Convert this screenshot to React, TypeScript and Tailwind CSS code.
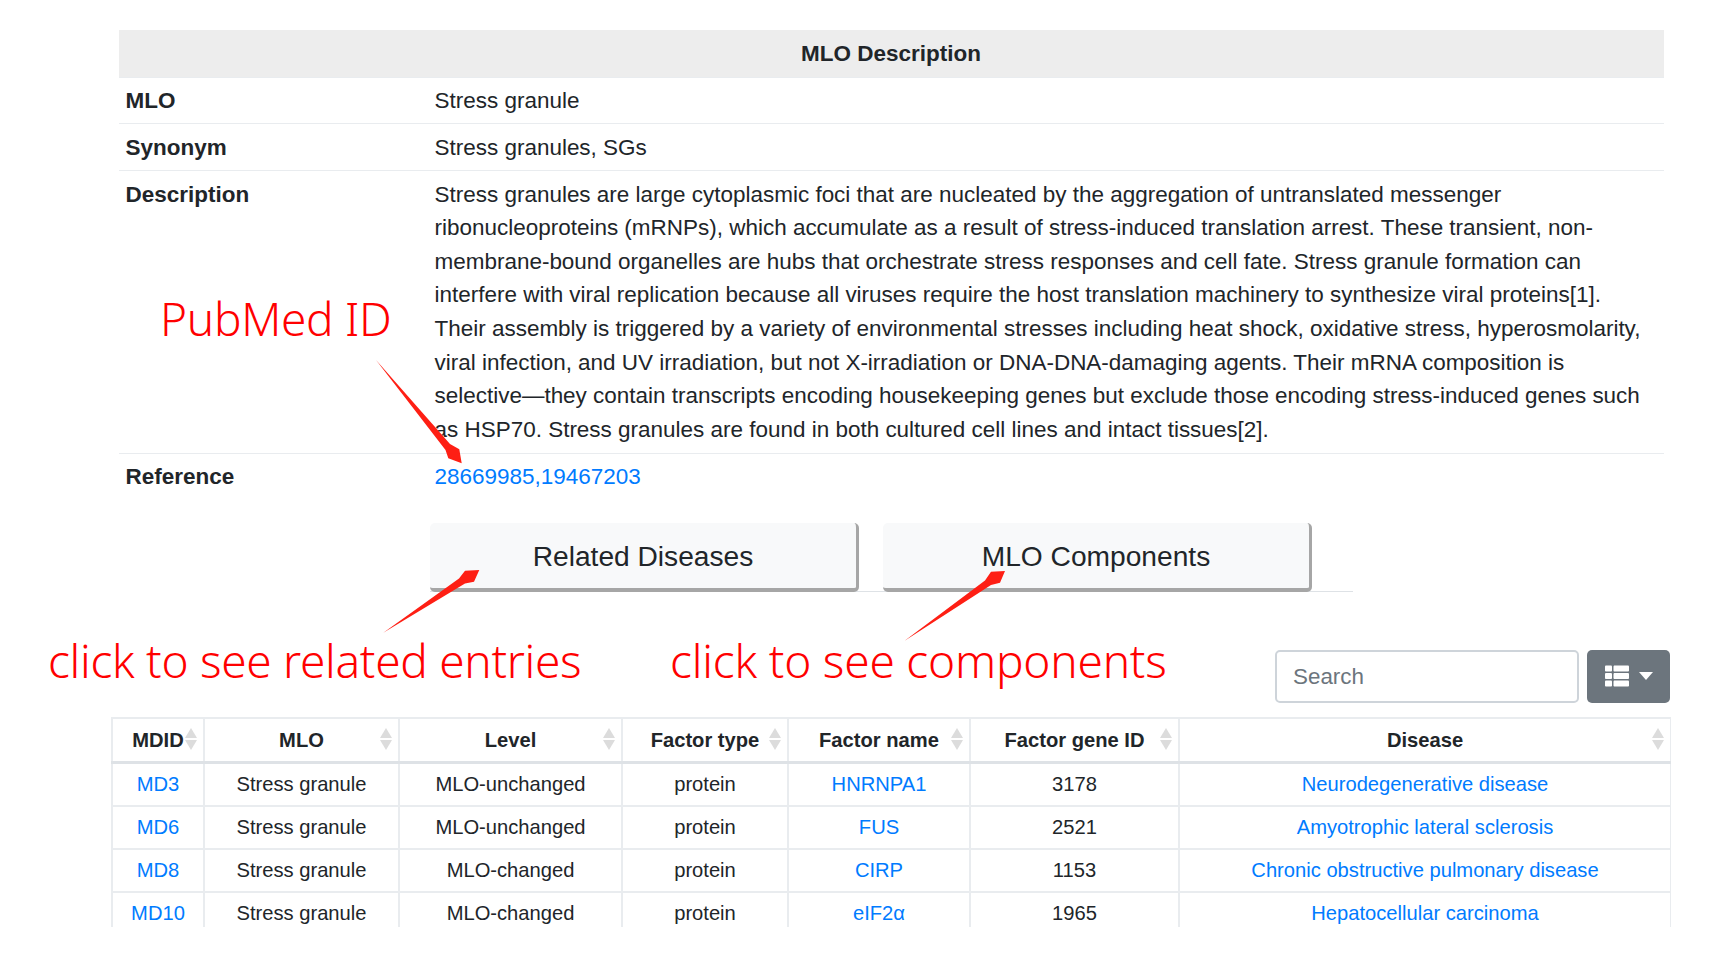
import React from "react";
import { FaThList } from "react-icons/fa";

const font = { fontFamily: '"Liberation Sans", Arial, sans-serif' };
const redFont = { fontFamily: '"Noto Sans", sans-serif' };

const desc =
  "Stress granules are large cytoplasmic foci that are nucleated by the aggregation of untranslated messenger ribonucleoproteins (mRNPs), which accumulate as a result of stress-induced translation arrest. These transient, non-membrane-bound organelles are hubs that orchestrate stress responses and cell fate. Stress granule formation can interfere with viral replication because all viruses require the host translation machinery to synthesize viral proteins[1]. Their assembly is triggered by a variety of environmental stresses including heat shock, oxidative stress, hyperosmolarity, viral infection, and UV irradiation, but not X-irradiation or DNA-DNA-damaging agents. Their mRNA composition is selective—they contain transcripts encoding housekeeping genes but exclude those encoding stress-induced genes such as HSP70. Stress granules are found in both cultured cell lines and intact tissues[2].";

const cols = [
  { label: "MDID", w: "w-[92px]" },
  { label: "MLO", w: "w-[195px]" },
  { label: "Level", w: "w-[223px]" },
  { label: "Factor type", w: "w-[166px]" },
  { label: "Factor name", w: "w-[182px]" },
  { label: "Factor gene ID", w: "w-[209px]" },
  { label: "Disease", w: "w-[492px]" },
];

const rows = [
  ["MD3", "MLO-unchanged", "HNRNPA1", "3178", "Neurodegenerative disease"],
  ["MD6", "MLO-unchanged", "FUS", "2521", "Amyotrophic lateral sclerosis"],
  ["MD8", "MLO-changed", "CIRP", "1153", "Chronic obstructive pulmonary disease"],
  ["MD10", "MLO-changed", "eIF2α", "1965", "Hepatocellular carcinoma"],
];

function Sort() {
  return (
    <svg className="absolute right-[6px] top-[9px]" width="12" height="22" viewBox="0 0 12 22">
      <path d="M6 0 L12 10 L0 10 Z" fill="#dcdcdc" />
      <path d="M6 22 L12 12 L0 12 Z" fill="#dcdcdc" />
    </svg>
  );
}

function InfoRow({ label, children }: { label: string; children: React.ReactNode }) {
  return (
    <tr className="border-t border-[#e9ecef] align-top">
      <th className="px-[7px] py-[6.2px] text-left font-bold">{label}</th>
      <td className="py-[6.2px] pr-[16px] pl-0">{children}</td>
    </tr>
  );
}

function Tab({ children }: { children: React.ReactNode }) {
  return (
    <div className="flex h-[69px] w-[429px] items-center justify-center rounded-[5px] border-r-[3px] border-b-[4px] border-[#a6a6a6] bg-[#f8f9fa] pt-[3px] text-[28.16px] text-[#212529]">
      {children}
    </div>
  );
}

export default function App() {
  return (
    <div className="relative h-[973px] w-[1730px] overflow-hidden bg-white pt-[30px] text-[#212529]" style={font}>
      <table className="ml-[118.5px] w-[1545px] table-fixed border-collapse text-[22.47px] leading-[33.6px]">
        <colgroup>
          <col className="w-[316px]" />
          <col />
        </colgroup>
        <thead>
          <tr className="bg-[#ededed]">
            <th colSpan={2} className="h-[47px] pt-[1px] text-center font-bold">MLO Description</th>
          </tr>
        </thead>
        <tbody>
          <InfoRow label="MLO">Stress granule</InfoRow>
          <InfoRow label="Synonym">Stress granules, SGs</InfoRow>
          <InfoRow label="Description">{desc}</InfoRow>
          <InfoRow label="Reference"><a className="text-[#007bff]">28669985,19467203</a></InfoRow>
        </tbody>
      </table>

      <div className="mt-[23.4px] ml-[430px] flex h-[69px] w-[923px] gap-[24px] border-b border-[#dee2e6]">
        <Tab>Related Diseases</Tab>
        <Tab>MLO Components</Tab>
      </div>

      <div className="mt-[58px] mr-[60px] flex justify-end gap-[8px]">
        <div className="flex h-[53px] w-[304px] items-center rounded-[5px] border-2 border-[#ced4da] px-[16px] text-[22.4px] text-[#6c757d]">Search</div>
        <div className="flex h-[53px] w-[83px] items-center justify-center gap-[10px] rounded-[5px] bg-[#6c757d] text-white">
          <FaThList className="h-[24px] w-[24px]" />
          <svg width="14" height="8" viewBox="0 0 14 8"><path d="M0 0 H14 L7 8 Z" fill="#fff" /></svg>
        </div>
      </div>

      <div className="mt-[14px] ml-[111px] h-[210px] w-[1560px] overflow-hidden">
        <table className="w-[1559px] table-fixed border-collapse text-center text-[20.16px] leading-[29px]">
          <colgroup>
            {cols.map((c) => (
              <col key={c.label} className={c.w} />
            ))}
          </colgroup>
          <thead>
            <tr>
              {cols.map((c) => (
                <th key={c.label} className="relative h-[45px] border-x-2 border-t-2 border-b-[3px] border-[#e9ecef] border-b-[#dee2e6] p-0 font-bold">
                  {c.label}
                  <Sort />
                </th>
              ))}
            </tr>
          </thead>
          <tbody>
            {rows.map((r) => (
              <tr key={r[0]} className="h-[43px]">
                <td className="border-2 border-[#e9ecef] p-0 text-[#007bff]">{r[0]}</td>
                <td className="border-2 border-[#e9ecef] p-0">Stress granule</td>
                <td className="border-2 border-[#e9ecef] p-0">{r[1]}</td>
                <td className="border-2 border-[#e9ecef] p-0">protein</td>
                <td className="border-2 border-[#e9ecef] p-0 text-[#007bff]">{r[2]}</td>
                <td className="border-2 border-[#e9ecef] p-0">{r[3]}</td>
                <td className="border-2 border-[#e9ecef] p-0 text-[#007bff]">{r[4]}</td>
              </tr>
            ))}
          </tbody>
        </table>
      </div>

      <div className="absolute top-[283px] left-[160px] whitespace-nowrap text-[46px] leading-[70px] font-light tracking-[-0.3px] text-[#ff0000]" style={redFont}>PubMed ID</div>
      <div className="absolute top-[625px] left-[48px] whitespace-nowrap text-[46px] leading-[70px] font-light tracking-[-0.3px] text-[#ff0000]" style={redFont}>click to see related entries</div>
      <div className="absolute top-[625px] left-[670px] whitespace-nowrap text-[46px] leading-[70px] font-light tracking-[-0.2px] text-[#ff0000]" style={redFont}>click to see components</div>

      <svg className="absolute top-0 left-0" width="1730" height="973" viewBox="0 0 1730 973">
        <path d="M376 360 L450 444 L459.3 449.3 L461.7 463.3 L448.3 458.3 L445.5 450 Z" fill="#fe1f14" />
        <path d="M383.3 632.7 L459 578.5 L465 570.7 L479.3 570 L474 581.7 L465 583.5 Z" fill="#fe1f14" />
        <path d="M904.3 641 L985 580.5 L991 571.7 L1005 571 L1000 582.7 L991 585 Z" fill="#fe1f14" />
      </svg>
    </div>
  );
}
